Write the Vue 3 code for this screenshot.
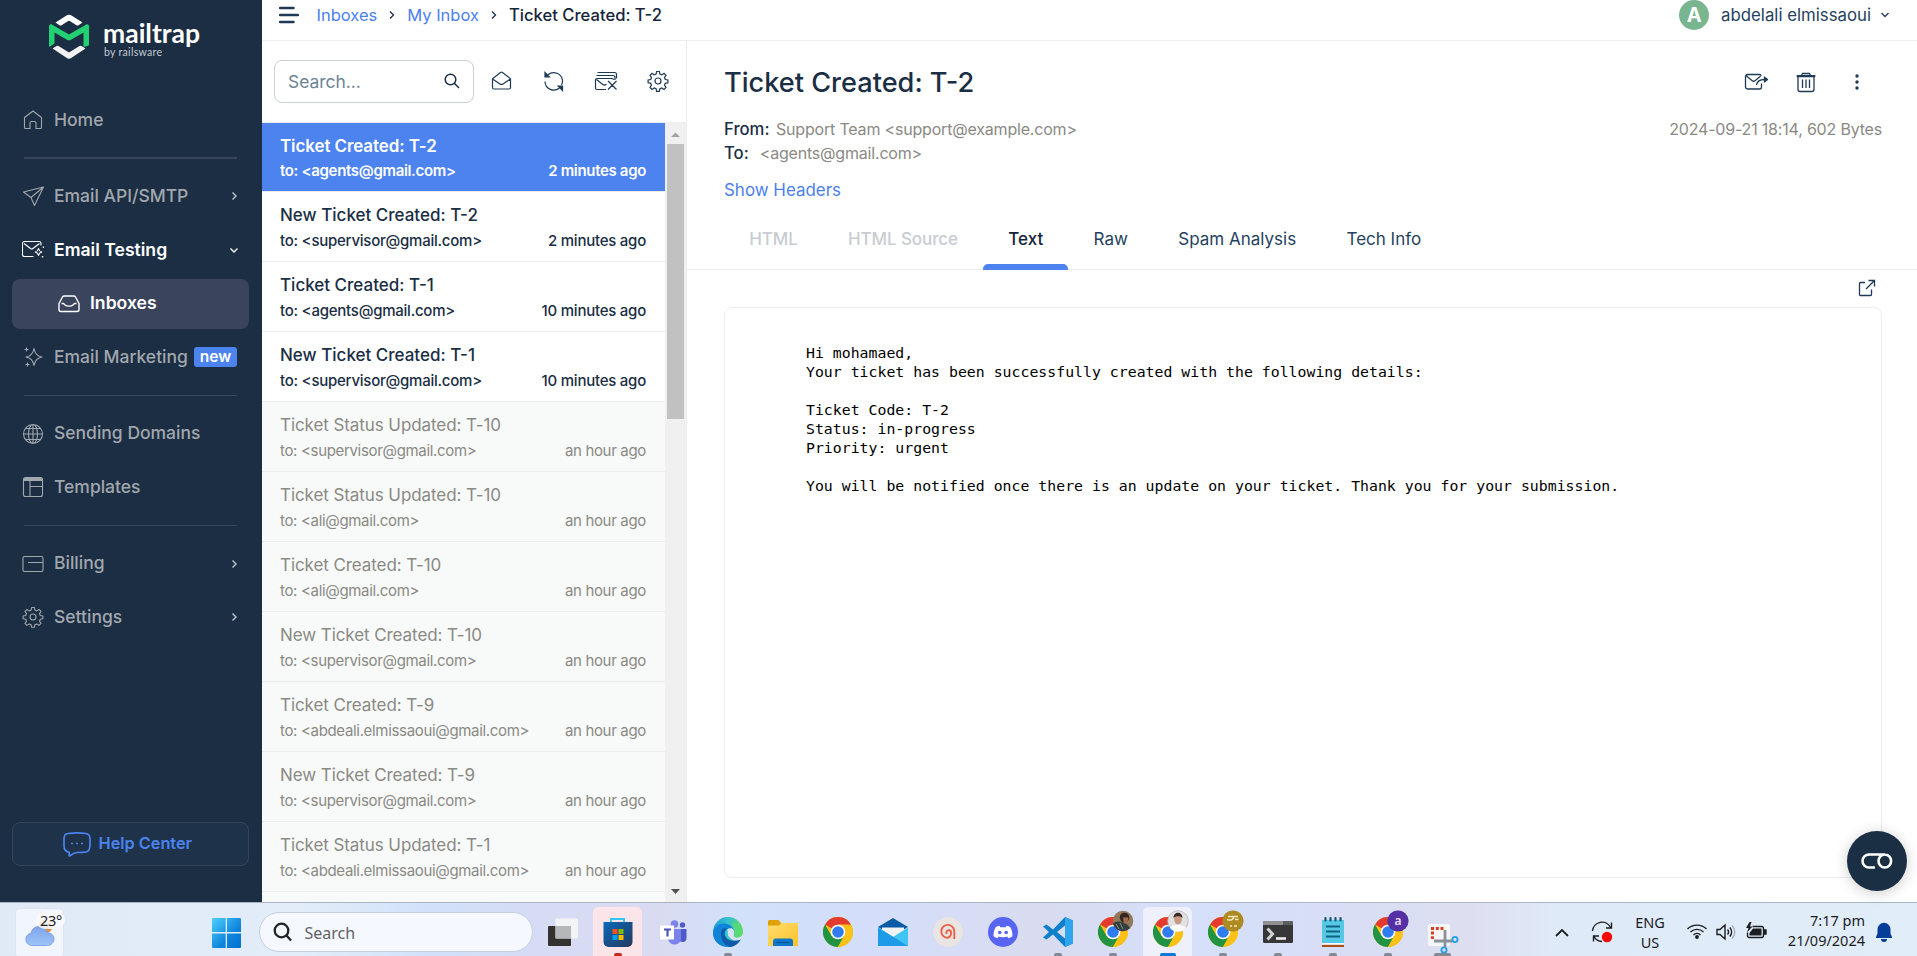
<script setup>
const primaryNav = [
  { rows: [{ label: 'Home', icon: 'home' }] },
  {
    rows: [
      { label: 'Email API/SMTP', icon: 'plane', arrow: 'right' },
      { label: 'Email Testing', icon: 'testing', arrow: 'down', open: true },
      { label: 'Inboxes', icon: 'inbox', active: true },
      { label: 'Email Marketing', icon: 'sparkle', badge: 'new' },
    ],
  },
  { rows: [{ label: 'Sending Domains', icon: 'globe' }, { label: 'Templates', icon: 'template' }] },
  {
    rows: [
      { label: 'Billing', icon: 'card', arrow: 'right' },
      { label: 'Settings', icon: 'gear', arrow: 'right' },
    ],
  },
]

const gear =
  'M9.600 1.500h2.800l.5 2.600 1.900.8 2.200-1.500 2 2-1.500 2.200.8 1.900 2.600.5v2.800l-2.600.5-.8 1.900 1.500 2.200-2 2-2.200-1.500-1.900.8-.5 2.600H9.600l-.5-2.600-1.900-.8-2.200 1.500-2-2 1.500-2.200-.8-1.900-2.600-.5v-2.800l2.600-.5.8-1.900L3 5.400l2-2 2.200 1.500 1.900-.8zM14 11a3 3 0 1 1-6 0a3 3 0 0 1 6 0z'

const icons = {
  home: 'M2.500 8.500 11 2l8.500 6.500V18.500a1 1 0 0 1-1 1H14v-5.500a1.500 1.500 0 0 0-1.500-1.500h-3A1.500 1.500 0 0 0 8 14v5.500H3.500a1 1 0 0 1-1-1z',
  plane: 'M1.500 7 21.500 2 12.500 20.500 9 12.500zM9 12.500 21.500 2',
  testing: 'M11.500 17.500H2.500a2 2 0 0 1-2-2v-11a2 2 0 0 1 2-2h14.500a2 2 0 0 1 2 2v2M2 4.500l6.500 5a2 2 0 0 0 2.400 0L17.500 4.500M16.500 9.500c.4 2 1.300 3 3.300 3.500-2 .5-2.900 1.500-3.300 3.500-.4-2-1.300-3-3.300-3.500 2-.5 2.900-1.500 3.300-3.500zM21.500 7.500v1.500M20.700 8.200h1.600M20.500 17v1.500M19.700 17.700h1.600',
  inbox: 'M1 10.500v6a2 2 0 0 0 2 2h16a2 2 0 0 0 2-2v-6l-3.300-6.300A2 2 0 0 0 16 3H6a2 2 0 0 0-1.700 1.200zM3.500 10.500H5.500l1.500 1.500c1.500 1.500 6.500 1.500 8 0l1.500-1.500h2',
  sparkle: 'M12 2.500c.9 5.200 2.800 7.600 8 8.500-5.200.9-7.100 3.300-8 8.500-.9-5.200-2.800-7.600-8-8.500 5.200-.9 7.100-3.300 8-8.500zM4.500 1.500v4M2.500 3.500h4M5.500 16.500v4M3.500 18.500h4',
  globe: 'M20.500 11a9.500 9.500 0 1 1-19 0a9.500 9.500 0 0 1 19 0zM15.500 11c0 5.200-2 9.500-4.500 9.500s-4.500-4.300-4.500-9.500 2-9.500 4.500-9.500 4.500 4.300 4.500 9.500zM11 1.500v19M1.500 11h19M3.500 5.500h15M3.500 16.500h15',
  template: 'M3.500 1.500h15a2 2 0 0 1 2 2v15a2 2 0 0 1-2 2h-15a2 2 0 0 1-2-2v-15a2 2 0 0 1 2-2zM2 2.500h18M1.500 3.500h19M1.500 4.500h19M8 4.500v16M8 10.500H20.500',
  card: 'M2.500 3.500h17a1.500 1.500 0 0 1 1.500 1.500v12a1.500 1.500 0 0 1-1.500 1.500h-17a1.500 1.500 0 0 1-1.500-1.500V5a1.500 1.500 0 0 1 1.500-1.500zM6 9.500h14.500',
  gear,
}

const addr = { s: 'supervisor@gmail.com', a: 'agents@gmail.com', l: 'ali@gmail.com', e: 'abdeali.elmissaoui@gmail.com' }
const messages = [
  { subject: 'Ticket Created: T-2', to: addr.a, when: '2 minutes ago', state: 'selected' },
  { subject: 'New Ticket Created: T-2', to: addr.s, when: '2 minutes ago', state: 'unread' },
  { subject: 'Ticket Created: T-1', to: addr.a, when: '10 minutes ago', state: 'unread' },
  { subject: 'New Ticket Created: T-1', to: addr.s, when: '10 minutes ago', state: 'unread' },
  { subject: 'Ticket Status Updated: T-10', to: addr.s, when: 'an hour ago', state: 'read' },
  { subject: 'Ticket Status Updated: T-10', to: addr.l, when: 'an hour ago', state: 'read' },
  { subject: 'Ticket Created: T-10', to: addr.l, when: 'an hour ago', state: 'read' },
  { subject: 'New Ticket Created: T-10', to: addr.s, when: 'an hour ago', state: 'read' },
  { subject: 'Ticket Created: T-9', to: addr.e, when: 'an hour ago', state: 'read' },
  { subject: 'New Ticket Created: T-9', to: addr.s, when: 'an hour ago', state: 'read' },
  { subject: 'Ticket Status Updated: T-1', to: addr.e, when: 'an hour ago', state: 'read' },
]

const tabs = [
  { label: 'HTML', state: 'disabled' },
  { label: 'HTML Source', state: 'disabled' },
  { label: 'Text', state: 'current' },
  { label: 'Raw' },
  { label: 'Spam Analysis' },
  { label: 'Tech Info' },
]

const body = `Hi mohamaed,
Your ticket has been successfully created with the following details:

Ticket Code: T-2
Status: in-progress
Priority: urgent

You will be notified once there is an update on your ticket. Thank you for your submission.`

const apps = [
  { id: 'tasks' },
  { id: 'store', mark: 'alert', tile: 'rose' },
  { id: 'teams' },
  { id: 'edge', mark: 'dot' },
  { id: 'folder' },
  { id: 'chrome' },
  { id: 'mail' },
  { id: 'swirl' },
  { id: 'discord' },
  { id: 'code', mark: 'dot' },
  { id: 'chrome', mark: 'dot', who: 'p1' },
  { id: 'chrome', mark: 'focus', who: 'p2', tile: 'light' },
  { id: 'chrome', mark: 'dot', who: 'p3' },
  { id: 'terminal', mark: 'dot' },
  { id: 'notepad', mark: 'dot' },
  { id: 'chrome', mark: 'dot', who: 'p4' },
  { id: 'snip', mark: 'wide' },
]
</script>

<template>
  <div class="screen">
    <div class="app">
      <aside class="sidebar">
        <div class="brand">
          <svg class="brand-mark" width="40" height="46" viewBox="0 0 40 46">
            <path d="M6.500 8.500 17.500 1.500a4.500 4.500 0 0 1 5 0L33.500 8.500 29.500 11.200a2 2 0 0 1-2 0L20.800 7a1.500 1.500 0 0 0-1.600 0l-6.700 4.200a2 2 0 0 1-2 0z" fill="#fff" />
            <path d="M3.500 34.500 7.500 32a2 2 0 0 1 2 0l9.700 6a1.500 1.500 0 0 0 1.600 0l9.700-6a2 2 0 0 1 2 0l4 2.500-14 9.300a4.500 4.500 0 0 1-5 0z" fill="#f2f2f3" />
            <path d="M0 12.500c0-2 1.500-2.800 3.200-1.800L20 20.600 36.800 10.700c1.700-1 3.200-.2 3.200 1.800V30.500a1.500 1.500 0 0 1-.7 1.200L34.500 33V18.500L22 25.700a4 4 0 0 1-4 0L5.500 18.500V29.500L.7 32.700Q0 33 0 32z" fill="#22d172" />
          </svg>
          <div class="brand-text">
            <svg width="98" height="31" viewBox="0 0 98 31"><text x="-1" y="28.500" textLength="97" lengthAdjust="spacingAndGlyphs" font-size="26" font-weight="700" fill="#fff">mailtrap</text></svg>
            <svg width="98" height="15" viewBox="0 0 98 15"><text x="0" y="11" textLength="58" font-size="10.500" fill="#c3cad2">by railsware</text></svg>
          </div>
        </div>
        <nav>
          <div v-for="(group, g) in primaryNav" :key="g" class="nav-group">
            <a v-for="row in group.rows" :key="row.label" class="nav-row" :class="[row.icon, { open: row.open, active: row.active }]">
              <svg class="nav-icon" width="22" height="22" viewBox="0 0 22 22"><path :d="icons[row.icon]" /></svg>
              <span class="nav-label">{{ row.label }}</span>
              <span v-if="row.badge" class="badge">{{ row.badge }}</span>
              <svg v-if="row.arrow" class="arrow" width="10" height="10" viewBox="0 0 10 10">
                <path :d="row.arrow === 'right' ? 'M3.500 1.500 7 5 3.500 8.500' : 'M1.500 3.500 5 7 8.500 3.500'" />
              </svg>
            </a>
          </div>
        </nav>
        <a class="help">
          <svg width="28" height="25" viewBox="0 0 28 25">
            <path d="M5 1.500C10 .8 18 .8 23 1.500c3 .4 3.800 2 4 5v7c-.2 4-1 6-4 6.500-3 .5-6 .5-9 .5-3 .3-5 1.500-7 3.300-.6.300-1 0-.8-.8V20.300C2.500 19.500 1 18 1 14V7c0-3.500 1-5.200 4-5.500z" />
            <path d="M8 11.500h2M13 11.500h2M18 11.500h2" />
          </svg>
          <span>Help Center</span>
        </a>
      </aside>

      <div class="main">
        <header class="topbar">
          <svg class="menu" width="20" height="18" viewBox="0 0 20 18"><path d="M1 2h13.500M1 9h18M1 16h13.500" /></svg>
          <a class="crumb">Inboxes</a>
          <svg class="sep" width="6" height="8" viewBox="0 0 6 8"><path d="M1 .5 4.500 4 1 7.500" /></svg>
          <a class="crumb">My Inbox</a>
          <svg class="sep" width="6" height="8" viewBox="0 0 6 8"><path d="M1 .5 4.500 4 1 7.500" /></svg>
          <span class="crumb here">Ticket Created: T-2</span>
          <div class="account">
            <span class="avatar">A</span>
            <span>abdelali elmissaoui</span>
            <svg width="10" height="8" viewBox="0 0 10 8"><path d="M1.500 2 5 5.500 8.500 2" /></svg>
          </div>
        </header>

        <div class="columns">
          <section class="list-pane">
            <div class="tools">
              <div class="search">
                <span>Search...</span>
                <svg width="16" height="16" viewBox="0 0 16 16"><circle cx="6.500" cy="6.500" r="5.300" /><path d="M10.300 10.300 15 15" /></svg>
              </div>
              <svg class="tool" width="22" height="22" viewBox="0 0 22 22">
                <path d="M1.500 7.700 9.500 1.500a2 2 0 0 1 2 0L19.500 7.700V16.500a1.500 1.500 0 0 1-1.500 1.500H3A1.500 1.500 0 0 1 1.500 16.500zM1.500 7.900l7.500 5a2.600 2.600 0 0 0 3 0L19.500 7.900" />
              </svg>
              <svg class="tool" width="22" height="22" viewBox="0 0 22 22">
                <path d="M5 3.800A8.800 8.800 0 0 1 19.500 9.500a8.800 8.800 0 0 1-1 4.500M16.500 17A8.800 8.800 0 0 1 2 10.500" />
                <path d="M2 1.500v4.300h4.300zM19.500 19.500v-4.300h-4.300z" fill="#1f3a56" />
              </svg>
              <svg class="tool" width="24" height="22" viewBox="0 0 24 22">
                <path d="M12 18.500H3A1.500 1.500 0 0 1 1.500 17V9A1.500 1.500 0 0 1 3 7.500h15A1.500 1.500 0 0 1 19.500 9M2.500 8.500l6 4.700a3 3 0 0 0 4 0M2.500 4.500h16.500a2 2 0 0 1 2 2V9M3.500 1.500h17a2 2 0 0 1 2 2v4M14 10l8.500 8.500M22.500 10 14 18.500" />
              </svg>
              <svg class="tool" width="22" height="22" viewBox="0 0 22 22"><path :d="icons.gear" /></svg>
            </div>
            <div class="list-wrap">
              <div class="list">
                <article v-for="(m, i) in messages" :key="i" class="message" :class="m.state">
                  <h3>{{ m.subject }}</h3>
                  <div class="meta"><span>to: &lt;{{ m.to }}&gt;</span><time>{{ m.when }}</time></div>
                </article>
                <div class="message-next"></div>
              </div>
              <div class="scrollbar">
                <svg width="17" height="21" viewBox="0 0 17 21"><path d="M4 14 8.500 9.500 13 14z" fill="#a3a3a3" /></svg>
                <div class="thumb"></div>
                <svg class="down" width="17" height="21" viewBox="0 0 17 21"><path d="M4 8h9L8.500 13z" fill="#505050" /></svg>
              </div>
            </div>
          </section>

          <section class="detail">
            <div class="detail-head">
              <div class="title-row">
                <h1>Ticket Created: T-2</h1>
                <div class="actions">
                  <svg width="24" height="20" viewBox="0 0 24 20">
                    <path d="M17.500 11.500V15a2 2 0 0 1-2 2h-12a2 2 0 0 1-2-2V4.500a2 2 0 0 1 2-2h12a2 2 0 0 1 1.800 1.200M2 3.500l6.200 5.200a2.200 2.200 0 0 0 2.800 0l5.500-4.500M12.500 13c.5-3.500 2.500-5.500 8-5.500" />
                    <path d="M20.500 5.200 23.500 7.500 20.500 9.800z" fill="#1f3a56" />
                  </svg>
                  <svg width="20" height="21" viewBox="0 0 20 21">
                    <path d="M.7 4.500h18.600M.7 3.700h18.600M5.500 3.500 6.500 1.500h7l1 2M2 5v12.500a2 2 0 0 0 2 2h12a2 2 0 0 0 2-2V5M6.500 7.500v8.500M10 7.500v8.500M13.500 7.500v8.500" />
                  </svg>
                  <svg width="6" height="18" viewBox="0 0 6 18"><g fill="#1f3a56" stroke="none"><circle cx="3" cy="3" r="1.700" /><circle cx="3" cy="9" r="1.700" /><circle cx="3" cy="15" r="1.700" /></g></svg>
                </div>
              </div>
              <div class="info-row">
                <div>
                  <p><b>From:</b><span class="from">Support Team &lt;support@example.com&gt;</span></p>
                  <p><b>To:</b><span class="to">&lt;agents@gmail.com&gt;</span></p>
                </div>
                <span class="stamp">2024-09-21 18:14, 602 Bytes</span>
              </div>
              <a class="show-headers">Show Headers</a>
            </div>
            <div class="tabs">
              <a v-for="t in tabs" :key="t.label" class="tab" :class="t.state">{{ t.label }}</a>
            </div>
            <div class="frame-tools">
              <svg width="18" height="18" viewBox="0 0 18 18"><path d="M7 3.500H2.500a1 1 0 0 0-1 1V15.500a1 1 0 0 0 1 1h10a1 1 0 0 0 1-1V10.500M8 10 16.500 1.500M10.500 1.500h6v6" /></svg>
            </div>
            <div class="frame"><pre>{{ body }}</pre></div>
          </section>
        </div>
      </div>

      <div class="floater">
        <svg width="32" height="18" viewBox="0 0 32 18"><path d="M14 15.500H8A6.500 6.500 0 0 1 8 2.500H24M17.500 9a6.300 6.500 0 1 0 12.600 0a6.300 6.500 0 1 0-12.600 0" /></svg>
      </div>
    </div>

    <footer class="taskbar">
      <div class="weather">
        <svg width="34" height="30" viewBox="0 0 34 30">
          <defs>
            <linearGradient id="cloud" x1="0" y1="0" x2="0" y2="1"><stop offset="0" stop-color="#7fa4ee" /><stop offset="1" stop-color="#9cc4f6" /></linearGradient>
          </defs>
          <circle cx="21.500" cy="7" r="7" fill="#f08a3c" />
          <path d="M7.500 26.500a6.200 6.200 0 0 1-.5-12.300c1-4.500 4-6.700 8-6.700 4.500 0 7.500 3 8 6 4 0 7 3 7 6.500s-3 6.500-6.500 6.500z" fill="url(#cloud)" stroke="#7397e2" stroke-width=".8" />
        </svg>
        <span>23°</span>
      </div>
      <svg class="windows" width="29" height="30" viewBox="0 0 29 30">
        <defs>
          <linearGradient id="win" x1="0" y1="0" x2="1" y2="1"><stop offset="0" stop-color="#4cd0fb" /><stop offset=".6" stop-color="#0f86dd" /><stop offset="1" stop-color="#0070cf" /></linearGradient>
        </defs>
        <path d="M1 0h12.700v14H0V1a1 1 0 0 1 1-1zM15 0h13a1 1 0 0 1 1 1v13H15zM0 15.500h13.700V30H1a1 1 0 0 1-1-1zM15 15.500h14V29a1 1 0 0 1-1 1H15z" fill="url(#win)" />
      </svg>
      <div class="win-search">
        <svg width="20" height="20" viewBox="0 0 20 20"><circle cx="8.500" cy="8.500" r="6.800" /><path d="M13.500 13.500 18 18.500" /></svg>
        <span>Search</span>
      </div>

      <div class="apps">
        <div v-for="(a, i) in apps" :key="i" class="slot" :class="a.tile">
          <svg class="glyph" width="30" height="30" viewBox="0 0 30 30">
            <g v-if="a.id === 'tasks'">
              <rect x="0" y="9" width="23" height="20" rx="1" fill="#32322f" />
              <rect x="7.500" y="1.500" width="22.500" height="20" rx="1" fill="#f4f4f6" opacity=".95" />
              <path d="M7.500 9H23v12.500H7.500z" fill="#b6b7ba" />
            </g>
            <g v-else-if="a.id === 'store'">
              <path d="M8 6V2h13v4" fill="none" stroke="#35c3f3" stroke-width="2" />
              <path d="M.5 5h29v20a5 5 0 0 1-5 5h-19a5 5 0 0 1-5-5z" fill="url(#storeFill)" />
              <path d="M9.500 12h5v5h-5z" fill="#f25022" /><path d="M15.500 12h5v5h-5z" fill="#7fba00" />
              <path d="M9.500 18h5v5h-5z" fill="#00a4ef" /><path d="M15.500 18h5v5h-5z" fill="#ffb900" />
            </g>
            <g v-else-if="a.id === 'teams'">
              <circle cx="16.500" cy="7" r="3.800" fill="#7b83eb" /><circle cx="24.500" cy="8" r="2.700" fill="#5059c9" />
              <path d="M21 12h7.500v9a4 4 0 0 1-7.500 2z" fill="#5059c9" />
              <path d="M9 12h14v8a6.500 6.500 0 0 1-13 2z" fill="#7b83eb" />
              <path d="M2 8.500h14v14H2z" fill="#fff" />
              <path d="M6 12.500h7M9.500 12.500v7" stroke="#4b53bc" stroke-width="2.200" />
            </g>
            <g v-else-if="a.id === 'edge'">
              <circle cx="15" cy="15" r="15" fill="url(#edgeTop)" />
              <path d="M0 16C1 9.500 6 6.500 11 6.500c6 0 10 4 10.500 9-.5-3-3-4.500-6-4C12 12 11 15.500 12 19c1.500 4.500 8 7 16 3-3 5.500-8 8-13 8C6.500 30 0 24 0 16z" fill="#1184d8" />
              <path d="M8.500 13c-2 6 1 14.500 8 17 5-.4 9-3.500 11.500-8.500-7.500 4-14 2-16-3-.9-3 .2-6 3-7-3-.5-5 0-6.500 1.500z" fill="#0c5cab" />
              <path d="M14.500 12c5-2 7.500 1 6.500 5-.5 2.500.5 3.500 3 3.500 4 0 6-3 6-6v6.500l-2 1.500c-6 2.500-10.500 0-13-4z" fill="#d5e2fa" />
              <path d="M21 17c-.5 2.500.5 3.500 3 3.500 4 0 6-3 6-6-1-6-6-9-12-9 3 3 4 7 3 11.500z" fill="#58d977" opacity=".75" />
            </g>
            <g v-else-if="a.id === 'folder'">
              <path d="M0 4.500a1.500 1.500 0 0 1 1.500-1.500h9L13 6h15.500A1.500 1.500 0 0 1 30 7.500V14H0z" fill="#dfa008" />
              <path d="M0 8.500h11L13.500 6H30v23H0z" fill="url(#folderFill)" />
              <path d="M5 29v-4.500a3 3 0 0 1 3-3h14a3 3 0 0 1 3 3V29z" fill="#0d76c8" /><path d="M8.500 25.500h13" stroke="#084f8f" />
            </g>
            <use v-else-if="a.id === 'chrome'" href="#chromeMark" />
            <g v-else-if="a.id === 'mail'">
              <path d="M0 10 15 1l15 9-15 9z" fill="#0b5ba6" /><path d="M4 10.500h22V20H4z" fill="#f1f3f5" />
              <path d="M0 10.500 15 20 30 10.500V29H0z" fill="#3fc4f5" /><path d="M0 10.500 30 29H0z" fill="#1e9be6" />
            </g>
            <g v-else-if="a.id === 'swirl'">
              <circle cx="15" cy="15" r="14.800" fill="#eae5e3" />
              <path d="M21.300 22V14.500a6.500 6.500 0 1 0-8 6.200c2.500.3 4.700-1.400 4.700-4.200v-1a2.300 2.300 0 0 0-4.600 0v1.500" fill="none" stroke="#ea6148" stroke-width="1.900" />
            </g>
            <g v-else-if="a.id === 'discord'">
              <circle cx="15" cy="15" r="15" fill="#5864f2" />
              <path d="M11.500 8.800c-1.500.2-2.700.7-3.700 1.300C6 13 5.500 16 5.500 19.300c1.400 1 2.800 1.600 4.200 2l1-1.800c2.800 1 5.800 1 8.600 0l1 1.800c1.400-.4 2.800-1 4.200-2 0-3.300-.5-6.300-2.300-9.200-1-.6-2.200-1.100-3.700-1.300l-.8 1.500h-5.400z" fill="#fff" />
              <circle cx="11.800" cy="15.500" r="1.800" fill="#5864f2" /><circle cx="18.200" cy="15.500" r="1.800" fill="#5864f2" />
            </g>
            <g v-else-if="a.id === 'code'">
              <path d="M22 0 30 3.500v23L22 30 10 17.500 3.500 22.500 0 20.500 6 15 0 9.500 3.500 7.500 10 12.500zM22 8.500 14 15l8 6.500z" fill="#1180cb" fill-rule="evenodd" />
              <path d="M22 0 30 3.500v23L22 30z" fill="#2ea5ee" />
            </g>
            <g v-else-if="a.id === 'terminal'">
              <rect x="0" y="4" width="30" height="22" rx="1.500" fill="#37373a" />
              <path d="M0 8V5.500A1.500 1.500 0 0 1 1.500 4H20v4z" fill="#8f9092" /><path d="M20 4h8.500A1.500 1.500 0 0 1 30 5.500V8H20z" fill="#5d5e60" />
              <path d="M4.500 11.500 9.500 17l-5 5.500" fill="none" stroke="#d2d2d2" stroke-width="3" /><path d="M13 21.500h10" stroke="#eee" stroke-width="2.600" />
            </g>
            <g v-else-if="a.id === 'notepad'">
              <path d="M4 26.500h22V30H4z" fill="#a8501d" /><path d="M4 26h22v1.800H4z" fill="#fff" /><path d="M4 3h22v23H4z" fill="#55c8e6" />
              <path d="M8 9.500h14M8 14.500h14M8 19.500h14" stroke="#10627f" stroke-width="1.800" />
              <path d="M7.500 1v2.500M12.500 1v2.500M17.500 1v2.500M22.500 1v2.500" stroke="#15566f" stroke-width="2.200" stroke-linecap="round" />
            </g>
            <g v-else>
              <rect x="0" y="7" width="22" height="22" rx="2" fill="#f7f7fa" />
              <path d="M15.500 11.500H4.500v10.500" fill="none" stroke="#d9411e" stroke-width="3" stroke-dasharray="3 1.700" />
              <path d="M17 13v17M6 24h18" stroke="#8b9199" stroke-width="2.800" />
              <circle cx="27" cy="22.500" r="2.600" fill="none" stroke="#22a0e8" stroke-width="1.800" />
              <circle cx="16" cy="33" r="2.600" fill="none" stroke="#22a0e8" stroke-width="1.800" />
            </g>
          </svg>
          <svg v-if="a.who" class="who" width="22" height="22" viewBox="0 0 22 22">
            <g v-if="a.who === 'p1'"><circle cx="11" cy="11" r="10.300" fill="#93785c" /><path d="M1 13.500C5 10 14 11 18 18a10 10 0 0 1-17-4.500z" fill="#33403f" /><circle cx="12.500" cy="7.500" r="4.800" fill="#332820" /><path d="M11 7.500h5.500l-1.500 6h-3z" fill="#a36d49" /><path d="M4 14l3 5M8 13l3 6" stroke="#81908f" /></g>
            <g v-else-if="a.who === 'p2'"><circle cx="11" cy="11" r="10.300" fill="#e2e0e1" stroke="#b9b9bd" stroke-width=".8" /><path d="M3 18c1-4 15-4 16 0a10.500 10.500 0 0 1-16 0z" fill="#fafafa" /><ellipse cx="11" cy="9" rx="3.900" ry="5.300" fill="#c99882" /><path d="M6.500 8c0-7 9-7 9 0-2-2.500-7-2.500-9 0z" fill="#372c2b" /></g>
            <g v-else-if="a.who === 'p3'"><circle cx="11" cy="11" r="10.600" fill="#ad8b22" /><path d="M6 6.500h10M5 9.500q6 2 7-3M13 9.500h3.500M8 16h2M12 16h3" stroke="#f3e8bd" stroke-width="1.600" fill="none" /></g>
            <g v-else><circle cx="11" cy="11" r="10.600" fill="#5530a5" /><text x="11" y="15" text-anchor="middle" font-size="12" font-weight="600" fill="#e9e0fa">a</text></g>
          </svg>
          <i v-if="a.mark" class="mark" :class="a.mark"></i>
        </div>
      </div>

      <div class="tray">
        <svg class="caret" width="16" height="10" viewBox="0 0 16 10"><path d="M2 8 8 2l6 6" /></svg>
        <svg class="sync" width="22" height="22" viewBox="0 0 22 22">
          <path d="M1.500 10A9.500 9.500 0 0 1 19.500 6.500M20.500 1.500V7H15M2.500 20.500V15H8M3 15.500a9.500 9.500 0 0 0 8 5" /><circle cx="16" cy="16" r="5.200" fill="#f90606" stroke="none" />
        </svg>
        <div class="lang"><span>ENG</span><span>US</span></div>
        <svg class="wifi" width="22" height="18" viewBox="0 0 22 18">
          <path d="M1.500 7a13.500 13.500 0 0 1 19 0M4.500 10a9.300 9.300 0 0 1 13 0M7.500 13a5 5 0 0 1 7 0" /><circle cx="11" cy="15" r="1.900" fill="#1c1d1f" stroke="none" />
        </svg>
        <svg class="sound" width="20" height="18" viewBox="0 0 20 18">
          <path d="M1 6.500h3L9 2v14l-5-4.500H1zM11.500 6.500a3.500 3.500 0 0 1 0 5M13.800 4.500a6.500 6.500 0 0 1 0 9" /><path d="M16 2.500a9 9 0 0 1 0 13" opacity=".3" />
        </svg>
        <svg class="battery" width="22" height="18" viewBox="0 0 22 18">
          <path d="M7.500 4.500h9a2 2 0 0 1 2 2v7a2 2 0 0 1-2 2h-12a2 2 0 0 1-2-2v-3" /><path d="M8 6.500h8.500v7h-12V11z" fill="#1c1d1f" stroke="none" /><path d="M19.500 8v4h1.500V8z" fill="#1c1d1f" />
          <path d="M4.500 0 1 6h2.500L2 10.500 7.500 4.500H5L6.500 0z" fill="#1c1d1f" stroke="none" />
        </svg>
        <div class="clock"><span>7:17 pm</span><span>21/09/2024</span></div>
        <svg class="bell" width="18" height="20" viewBox="0 0 18 20">
          <path d="M9 .8a6.500 6.500 0 0 1 6.500 6.500v4.200l1.500 3.500v1H1v-1l1.500-3.500V7.300A6.500 6.500 0 0 1 9 .8zM6 17h6a3 3 0 0 1-6 0z" fill="#063d99" />
        </svg>
      </div>
    </footer>

    <svg class="defs" width="0" height="0">
      <defs>
        <linearGradient id="storeFill" x1="0" y1="0" x2="1" y2="1"><stop offset="0" stop-color="#0a68b8" /><stop offset="1" stop-color="#233a5e" /></linearGradient>
        <linearGradient id="edgeTop" x1="0" y1=".2" x2="1" y2=".4"><stop offset="0" stop-color="#1d9fd8" /><stop offset=".5" stop-color="#35c3cf" /><stop offset="1" stop-color="#66dd55" /></linearGradient>
        <linearGradient id="folderFill" x1="0" y1="0" x2="1" y2="1"><stop offset="0" stop-color="#ffdc6e" /><stop offset="1" stop-color="#fbc22a" /></linearGradient>
        <symbol id="chromeMark" viewBox="0 0 30 30">
          <circle cx="15" cy="15" r="15" fill="#fbc116" />
          <path d="M15 15 2 7.500A15 15 0 0 1 28 7.500H15z" fill="#e33b2e" />
          <path d="M2 7.500A15 15 0 0 0 15 30L21.500 18.700 15 15 8.500 18.700z" fill="#229342" />
          <path d="M15 8.200h13.400A15 15 0 0 1 15 30l6-11z" fill="#fbc116" />
          <circle cx="15" cy="15" r="7.300" fill="#fff" /><circle cx="15" cy="15" r="5.800" fill="#2f7bef" />
        </symbol>
      </defs>
    </svg>
  </div>
</template>

<style>
body { margin: 0; overflow: hidden; }
</style>

<style scoped>
* { box-sizing: border-box; }
.screen { width: 1917px; height: 956px; display: flex; flex-direction: column; font-family: Inter, "Liberation Sans", sans-serif; background: #fff; color: #1a2e44; overflow: hidden; }
.app { position: relative; height: 902px; display: flex; }
svg { display: block; flex: none; fill: none; }
h1, h3, p, pre { margin: 0; }
.defs { position: absolute; }

.sidebar { width: 262px; flex: none; background: #1b2e43; display: flex; flex-direction: column; padding: 0 13px 36px 12px; }
.brand { height: 93px; padding: 14px 0 0 37px; display: flex; gap: 15px; }
.brand-text svg { overflow: visible; font-family: Lato, "Open Sans", sans-serif; }
.nav-group + .nav-group::before { content: ""; display: block; height: 1px; margin: 10px 0 11px 12px; width: 213px; background: #38455c; }
.nav-group:nth-child(2)::before { height: 2px !important; margin-bottom: 10px !important; }
.nav-row { height: 54px; display: flex; align-items: center; padding: 0 12px 0 10px; border-radius: 8px; font-size: 17.500px; line-height: 24px; font-weight: 500; color: #a1a7ad; }
.nav-icon { stroke: #a1a7ad; stroke-width: 1.1; margin-right: 10px; stroke-linejoin: round; }
.nav-label { white-space: nowrap; }
.nav-group:nth-child(n + 3) .nav-label, .inbox .nav-label, .sparkle .nav-label,
.sparkle .nav-icon, .sparkle .badge, .template .nav-icon, .gear svg { position: relative; top: -1px; }
.arrow { margin-left: auto; margin-right: -1.500px; stroke: #c2c7cc; stroke-width: 1.400; }
.open { color: #fff; font-weight: 600; font-size: 17.600px; }
.open .nav-icon, .active .nav-icon, .open .arrow { stroke: #fff; }
.active { height: 50px; margin: 2px 0; padding-left: 45.500px; background: #3a445d; color: #fff; font-weight: 600; font-size: 17.600px; }
.active .nav-icon { margin-right: 10.500px; stroke-width: 1.400; }
.badge { margin-left: auto; width: 43px; height: 20px; border-radius: 3px; background: #4d83ee; color: #fff; font-size: 15.500px; font-weight: 600; line-height: 19px; text-align: center; }
.help { margin-top: auto; height: 44px; border: 1px solid #36435a; border-radius: 8px; background: #1e3349; display: flex; align-items: center; padding-left: 50px; gap: 7.500px; color: #4c83f0; font-size: 16.300px; font-weight: 600; white-space: nowrap; }
.help span { position: relative; top: -1px; }
.help svg { stroke: #4c83f0; stroke-width: 1.700; }

.main { flex: 1; min-width: 0; display: flex; flex-direction: column; }
.topbar { height: 41px; border-bottom: 1px solid #eceded; display: flex; align-items: center; padding: 0 27px 10px 17px; font-size: 16.500px; line-height: 22px; white-space: nowrap; }
.menu { stroke: #1f3a56; stroke-width: 2.500; stroke-linecap: round; margin-right: 17.500px; }
.sep { stroke: #1a2e44; stroke-width: 1.300; margin: 0 12px; }
.crumb { color: #4c7fec; }
.here { color: #14253a; font-weight: 500; font-size: 16.600px; }
.account { margin-left: auto; display: flex; align-items: center; gap: 12px; font-size: 16.800px; color: #24415e; }
.account svg { stroke: #24415e; stroke-width: 1.400; margin-left: -3px; }
.avatar { width: 30px; height: 30px; border-radius: 50%; background: #79b58f; color: #fff; font-size: 20px; font-weight: 700; line-height: 30px; text-align: center; }

.columns { flex: 1; min-height: 0; display: flex; }
.list-pane { width: 425px; border-right: 1px solid #eceded; display: flex; flex-direction: column; }
.tools { height: 82px; border-bottom: 1px solid #eceded; display: flex; align-items: center; padding: 0 17px 0 12px; }
.search { width: 200px; height: 43px; border: 1px solid #cbcfd6; border-radius: 8px; display: flex; align-items: center; justify-content: space-between; padding: 0 13px 1px 13px; font-size: 17.400px; color: #6e8496; margin-right: 17px; }
.search svg { stroke: #1a2e44; stroke-width: 1.500; }
.tool { stroke: #1f3a56; stroke-width: 1.200; margin-right: 30px; }
.tool:last-child { margin: 0 0 1px -1px; }
.tool:nth-child(4) { margin-left: -1px; }
.list-wrap { flex: 1; min-height: 0; display: flex; }
.list { width: 403px; overflow: hidden; }
.message { height: 70px; border-bottom: 1px solid #eceded; padding: 11px 19px 0 18px; white-space: nowrap; }
.message:first-child { height: 69px; }
.message:first-child .meta { margin-top: 3px; }
.message h3 { font-size: 17px; line-height: 24px; font-weight: 500; }
.meta { margin-top: 4px; display: flex; justify-content: space-between; font-size: 15px; line-height: 20px; letter-spacing: -.3px; }
.selected { background: #4d83ee; color: #fff; }
.selected h3 { font-weight: 600; letter-spacing: -.1px; }
.selected .meta { font-weight: 600; letter-spacing: -.33px; }
.unread .meta { font-weight: 500; letter-spacing: -.24px; }
.read { background: #f8faf9; color: #8a8984; }
.read .meta { letter-spacing: -.33px; }
.read h3 { font-weight: 400; letter-spacing: -.08px; }
.message-next { height: 20px; background: #f8faf9; }
.scrollbar { flex: 1; background: #f0f0f0; display: flex; flex-direction: column; padding-left: 2px; }
.scrollbar .thumb { width: 17px; height: 275px; background: #c1c1c1; }
.scrollbar .down { margin-top: auto; }

.detail { flex: 1; min-width: 0; display: flex; flex-direction: column; }
.detail-head { padding: 24px 35px 0 37px; height: 173px; }
.title-row { display: flex; justify-content: space-between; align-items: center; height: 34px; }
h1 { padding-top: 2px; font-size: 27.150px; line-height: 34px; font-weight: 500; }
.actions { display: flex; align-items: center; padding-right: 22px; gap: 28px; }
.actions svg, .frame-tools svg { stroke: #1f3a56; stroke-width: 1.300; }
.actions svg:last-child { margin-left: 10px; }
.info-row { margin-top: 18px; display: flex; justify-content: space-between; font-size: 16px; line-height: 24px; letter-spacing: -.19px; color: #8a8984; }
b { font-size: 16.700px; font-weight: 500; color: #1a2e44; letter-spacing: 0; }
.from { margin-left: 6.500px; }
.to { margin-left: 11px; }
.show-headers { display: block; margin-top: 13px; font-size: 16.950px; line-height: 24px; color: #4c7fec; }
.tabs { height: 56px; border-bottom: 1px solid #eceded; display: flex; padding-left: 37px; }
.tab { height: 56px; padding: 0 25.200px; font-size: 17px; line-height: 50px; color: #24415e; white-space: nowrap; }
.tab.disabled { color: #c8ccd2; font-weight: 500; letter-spacing: -.1px; }
.tab.current { color: #14253a; font-weight: 500; position: relative; }
.tab.current::after { content: ""; position: absolute; left: 0; right: 0; bottom: 0; height: 6px; border-radius: 5px 5px 0 0; background: #4d83ee; }
.frame-tools { height: 37px; padding: 9px 41px 0 0; display: flex; justify-content: flex-end; }
.frame { margin: 0 35px 0 37px; height: 571px; border: 1px solid #eceded; border-radius: 8px; padding: 35px 81px; }
pre { font: 14.800px/19px "DejaVu Sans Mono", "Liberation Mono", monospace; letter-spacing: .028px; color: #000; }
.floater { position: absolute; right: 10px; bottom: 11px; width: 60px; height: 60px; border-radius: 50%; background: #1a2e44; display: flex; align-items: center; justify-content: center; box-shadow: 0 2px 14px rgba(0, 0, 0, .2); }
.floater svg { stroke: #fff; stroke-width: 2.600; }

.taskbar { height: 54px; border-top: 1px solid #a9b4c4; display: flex; font-family: "Noto Sans", "Open Sans", sans-serif; background: linear-gradient(90deg, #dfeaf6 0, #e2edf9 300px, #d2e1fa 430px, #d6dcf5 530px, #d9dcf1 660px, #d2e1fa 740px, #d4defa 880px, #d9dcf0 1040px, #d5e0fa 1180px, #d8def6 1330px, #dddff0 1470px, #dfeaf8 1560px, #e1edf9 100%); }
.weather { position: relative; width: 49px; height: 50px; margin: 5px 0 0 15px; border: 1px solid #dbe4f0; border-radius: 5px; background: #f1f5fd; }
.weather svg { margin: 10px 0 0 8px; }
.weather span { position: absolute; left: 20px; top: 2px; padding: 0 3px 0 4px; border-radius: 9px; background: rgba(248, 250, 254, .9); font-size: 14.500px; line-height: 18px; letter-spacing: -.3px; color: #1c1d1f; }
.windows { margin: 15px 0 0 148px; }
.win-search { margin: 9px 0 0 18px; width: 274px; height: 40px; border: 1px solid #c5cfe0; border-radius: 20px; background: #f5f8fe; display: flex; align-items: center; padding: 0 13px; gap: 11.500px; font-size: 16px; color: #606266; }
.win-search svg { stroke: #222325; stroke-width: 2.300; }
.win-search span { padding-top: 1px; }
.apps { display: flex; margin-left: 2px; }
.slot { position: relative; width: 49px; margin: 4px 3px 0; height: 50px; border-radius: 5px 5px 0 0; display: flex; justify-content: center; }
.glyph { margin-top: 10px; overflow: visible; }
.rose { background: #fbe5e8; }
.light { background: #eef1fb; }
.who { position: absolute; left: 24px; top: 3px; }
.mark { position: absolute; bottom: 0; width: 8px; height: 4px; border-radius: 3px; background: #838995; }
.mark.alert { background: #c42b1c; }
.mark.focus { width: 16px; background: #0c78d6; }
.mark.wide { width: 17px; }
.tray { flex: 1; display: flex; align-items: flex-start; color: #1c1d1f; font-size: 14.500px; line-height: 20px; }
.tray svg { stroke: #1c1d1f; stroke-width: 1.400; }
.tray .caret { margin: 25px 0 0 84px; stroke-width: 1.800; }
.tray .sync { margin: 18px 0 0 21px; }
.lang, .clock { display: flex; flex-direction: column; margin-top: 9px; }
.lang { align-items: center; width: 34px; margin-left: 20px; }
.wifi { margin: 19px 0 0 19px; }
.sound { margin: 20px 0 0 8px; }
.battery { margin: 19px 0 0 9px; }
.clock { align-items: flex-end; width: 84px; margin-left: 14px; margin-top: 7px; }
.tray .bell { margin: 19px 0 0 10px; stroke: none; }
</style>
